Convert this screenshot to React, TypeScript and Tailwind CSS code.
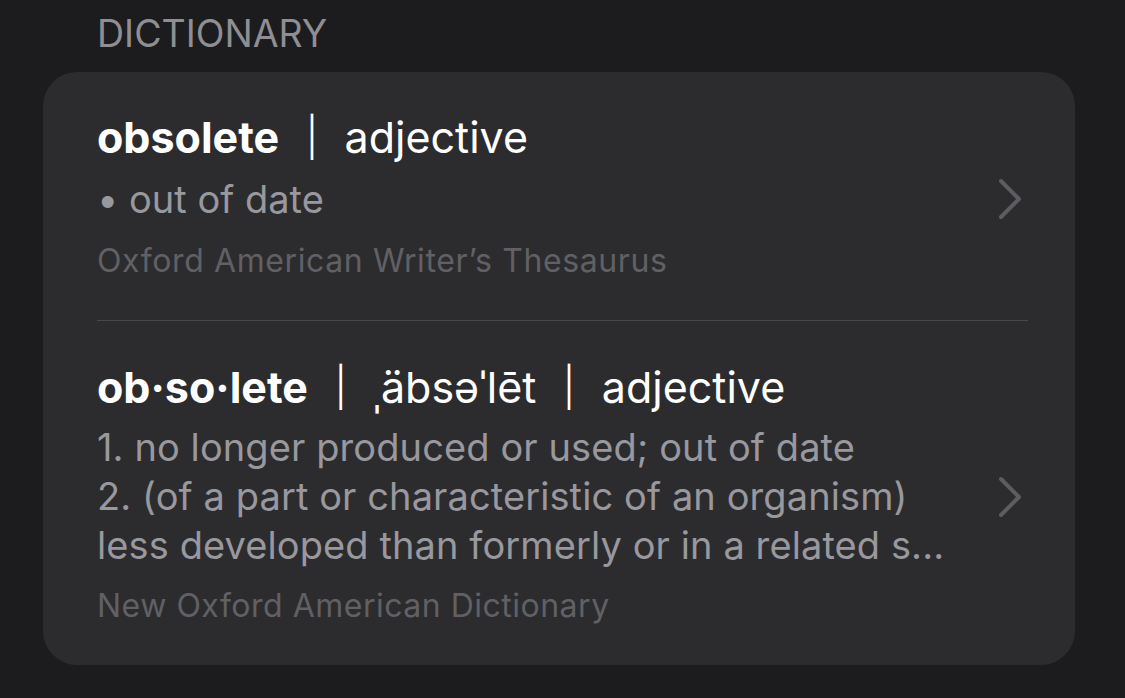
import React from "react";

function Chevron() {
  return (
    <svg width="28" height="44" viewBox="0 0 28 44" fill="none" className="shrink-0 mr-[3px]">
      <path d="M4 4 L22 22 L4 40" stroke="#5c5c61" strokeWidth="4" strokeLinecap="round" strokeLinejoin="round" />
    </svg>
  );
}

function Pipe() {
  return <span className="inline-block mx-[26px] font-light scale-y-[0.9]">|</span>;
}

export default function App() {
  return (
    <div
      className="w-[1125px] h-[698px] bg-[#1c1c1e] overflow-hidden"
      style={{ fontFamily: "Inter, 'Noto Sans', sans-serif" }}
    >
      <div className="pl-[97px] pt-[13px] h-[72px] text-[37.5px] leading-[42px] text-[#8e8e93]">
        DICTIONARY
      </div>
      <div className="ml-[43px] w-[1032px] h-[593px] bg-[#2c2c2e] rounded-[34px] pl-[54px] pr-[47px] pt-[34px]">
        <div className="flex items-center">
          <div className="flex-1">
            <div className="text-[43px] leading-[62px] text-white whitespace-nowrap">
              <span className="font-bold">obsolete</span>
              <Pipe />
              <span>adjective</span>
            </div>
            <div className="text-[38px] leading-[62px] text-[#98989e]">• out of date</div>
            <div className="text-[32px] leading-[62px] tracking-[0.6px] text-[#606065]">Oxford American Writer’s Thesaurus</div>
          </div>
          <Chevron />
        </div>
        <div className="mt-[28px] h-px bg-[#48484b]" />
        <div className="flex items-center pt-[35px]">
          <div className="flex-1">
            <div className="text-[43px] leading-[62px] text-white whitespace-nowrap">
              <span className="font-bold">ob·so·lete</span>
              <Pipe />
              <span>ˌäbsəˈlēt</span>
              <Pipe />
              <span>adjective</span>
            </div>
            <div className="mt-[5px] text-[38px] leading-[49px] text-[#98989e] whitespace-nowrap tracking-[0.1px]">
              <div>1. no longer produced or used; out of date</div>
              <div>2. (of a part or characteristic of an organism)</div>
              <div>less developed than formerly or in a related s...</div>
            </div>
            <div className="mt-[5px] text-[32px] leading-[62px] tracking-[0.5px] text-[#606065]">New Oxford American Dictionary</div>
          </div>
          <Chevron />
        </div>
      </div>
    </div>
  );
}
